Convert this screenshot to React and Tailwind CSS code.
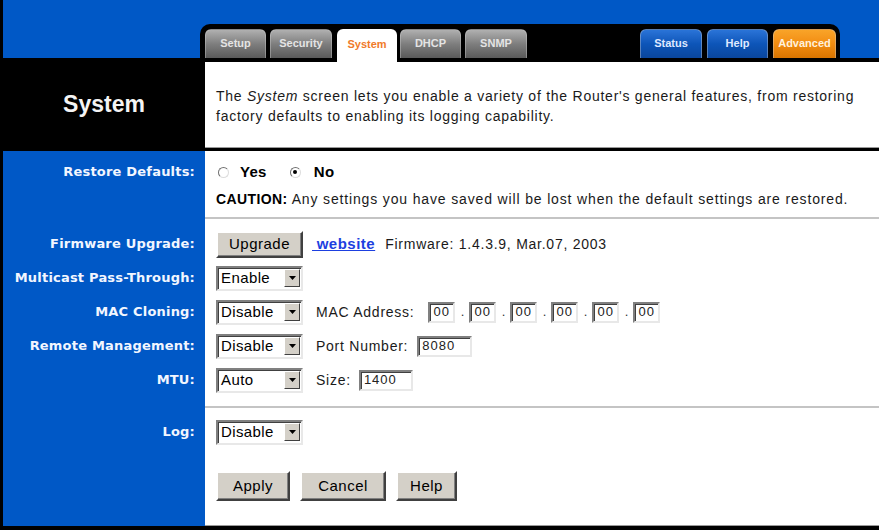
import { useState } from "react";

const BLUE = "bg-[#0058c6]";

function Tab({ label, active, kind = "gray", w }) {
  const styles = {
    gray: "bg-gradient-to-b from-[#b0b0b0] via-[#7e7e7e] to-[#5a5a5a] text-[#e4e4e4]",
    blue: "bg-gradient-to-b from-[#2a74d8] via-[#0d55b8] to-[#0a469c] text-[#dfe9ff]",
    orange: "bg-gradient-to-b from-[#f9a428] via-[#f28c10] to-[#d87400] text-[#fff1dc]",
  };
  if (active) {
    return (
      <div className={`${w} h-[33px] -mb-[4px] relative z-10 bg-white rounded-t-[6px] flex items-start justify-center pt-[7px] text-[11px] font-bold text-[#f07a2a]`}>
        {label}
      </div>
    );
  }
  return (
    <div className={`${w} h-[29px] rounded-t-[6px] flex items-center justify-center pb-[1px] text-[11px] font-bold border-t border-x border-[#d0d0d0]/40 ${styles[kind]}`}>
      {label}
    </div>
  );
}

function Label({ children, top }) {
  return (
    <div
      className={`w-[202px] shrink-0 ${BLUE} flex justify-end pr-[10px] text-[13px] tracking-[0.2px] font-bold text-[#f2f6ff] ${top ? "items-start pt-[11px] leading-[20px]" : "items-center"}`}
      style={{ fontFamily: '"DejaVu Sans", Verdana, sans-serif' }}
    >
      {children}
    </div>
  );
}

function Row({ label, h = "h-[34px]", children }) {
  return (
    <div className={`flex ${h}`}>
      <Label>{label}</Label>
      <div className="flex-1 bg-white flex items-center pl-[11px]">{children}</div>
    </div>
  );
}

function Spacer({ h }) {
  return (
    <div className={`flex ${h}`}>
      <div className={`w-[202px] shrink-0 ${BLUE}`} />
      <div className="flex-1 bg-white" />
    </div>
  );
}

function Separator() {
  return (
    <div className="flex h-[2px]">
      <div className={`w-[202px] shrink-0 ${BLUE}`} />
      <div className="flex-1 bg-[#c4c4c4]" />
    </div>
  );
}

function Select({ value, w = "w-[87px]" }) {
  return (
    <div className={`${w} h-[25px] bg-white border-2 border-t-[#808080] border-l-[#808080] border-r-[#e8e8e8] border-b-[#e8e8e8] shadow-[inset_1px_1px_0_#404040] flex items-center pl-[3px] pr-[1px] text-[15px] tracking-[0.4px] text-black`}>
      <span>{value}</span>
      <div className="ml-auto w-[16px] h-[18px] bg-[#d4d0c8] border border-t-white border-l-white border-r-[#404040] border-b-[#404040] flex items-center justify-center">
        <svg width="7" height="4" viewBox="0 0 7 4">
          <path d="M0 0h7L3.5 4z" fill="#000" />
        </svg>
      </div>
    </div>
  );
}

function Button({ children, w, h = "h-[30px]" }) {
  return (
    <button className={`${w} ${h} bg-[#d4d0c8] border-2 border-t-white border-l-white border-r-[#404040] border-b-[#404040] shadow-[inset_-1px_-1px_0_#808080] text-[15px] tracking-[0.5px] text-black flex items-center justify-center`}>
      {children}
    </button>
  );
}

function TextBox({ value, w }) {
  return (
    <div className={`${w} h-[21px] bg-white border-2 border-t-[#808080] border-l-[#808080] border-r-[#e8e8e8] border-b-[#e8e8e8] shadow-[inset_1px_1px_0_#404040] flex items-center pl-[3px] text-[13px] tracking-[1px] text-[#222]`}>
      {value}
    </div>
  );
}

function Radio({ checked }) {
  return (
    <div className="w-[11px] h-[11px] rounded-full bg-white border border-t-[#707070] border-l-[#707070] border-r-[#dcdcdc] border-b-[#dcdcdc] flex items-center justify-center">
      {checked && <div className="w-[4px] h-[4px] rounded-full bg-black" />}
    </div>
  );
}

const body = "text-[14px] tracking-[0.75px] text-[#1a1a1a]";

export default function App() {
  const [restore, setRestore] = useState("no");
  const mac = ["00", "00", "00", "00", "00", "00"];

  return (
    <div
      className="w-[879px] h-[530px] bg-black pl-[3px] pb-[4px] overflow-hidden flex flex-col"
      style={{ fontFamily: '"Liberation Sans", Arial, sans-serif' }}
    >
      {/* Header with tabs */}
      <div className={`h-[58px] shrink-0 ${BLUE} flex items-end`}>
        <div className="w-[197px]" />
        <div className="w-[640px] h-[34px] bg-black rounded-t-[10px] flex items-end pl-[5px] pr-[4px]">
          <Tab label="Setup" w="w-[61px]" />
          <div className="w-[4px]" />
          <Tab label="Security" w="w-[62px]" />
          <div className="w-[5px]" />
          <Tab label="System" w="w-[60px]" active />
          <div className="w-[3px]" />
          <Tab label="DHCP" w="w-[61px]" />
          <div className="w-[4px]" />
          <Tab label="SNMP" w="w-[62px]" />
          <div className="flex-1" />
          <Tab label="Status" w="w-[62px]" kind="blue" />
          <div className="w-[5px]" />
          <Tab label="Help" w="w-[61px]" kind="blue" />
          <div className="w-[5px]" />
          <Tab label="Advanced" w="w-[63px]" kind="orange" />
        </div>
      </div>

      {/* Title / description */}
      <div className="h-[93px] shrink-0 flex">
        <div className="w-[202px] shrink-0 bg-black flex items-center justify-center text-[23px] font-bold text-[#f4f4f4]">
          System
        </div>
        <div className="flex-1 flex flex-col pt-[4px]">
          <div className={`flex-1 bg-white pl-[11px] pt-[24px] leading-[20px] border-b border-[#9a9a9a] ${body}`}>
            The <i>System</i> screen lets you enable a variety of the Router's general features, from restoring
            <br />
            factory defaults to enabling its logging capability.
          </div>
          <div className="h-[3px] bg-black" />
        </div>
      </div>

      {/* Settings */}
      <div className="flex-1 flex flex-col">
        <div className="flex h-[66px]">
          <Label top>Restore Defaults:</Label>
          <div className="flex-1 bg-white pl-[11px] pt-[11px]">
            <div className="h-[20px] flex items-center text-[15px] tracking-[0.3px] font-bold text-black">
              <button className="flex items-center" onClick={() => setRestore("yes")}>
                <span className="ml-[2px]"><Radio checked={restore === "yes"} /></span>
                <span className="ml-[11px]">Yes</span>
              </button>
              <button className="flex items-center ml-[23px]" onClick={() => setRestore("no")}>
                <Radio checked={restore === "no"} />
                <span className="ml-[13px]">No</span>
              </button>
            </div>
            <div className="mt-[8px] h-[18px] flex items-center text-[14px] tracking-[0.85px] text-[#1a1a1a]">
              <b className="text-black tracking-[0.4px]">CAUTION:</b>
              <span className="ml-[4px]">Any settings you have saved will be lost when the default settings are restored.</span>
            </div>
          </div>
        </div>
        <Separator />
        <Spacer h="h-[8px]" />

        <Row label="Firmware Upgrade:">
          <Button w="w-[87px]" h="h-[27px]">Upgrade</Button>
          <a className="ml-[9px] text-[15px] tracking-[0.5px] font-bold text-[#1d3fe0] underline">&nbsp;website</a>
          <span className={`ml-[10px] ${body}`}>Firmware: 1.4.3.9, Mar.07, 2003</span>
        </Row>
        <Row label="Multicast Pass-Through:">
          <Select value="Enable" />
        </Row>
        <Row label="MAC Cloning:">
          <Select value="Disable" />
          <span className={`ml-[13px] mr-[14px] ${body}`}>MAC Address:</span>
          {mac.map((m, i) => (
            <div key={i} className="flex items-center">
              {i > 0 && <span className="w-[14px] text-center text-[13px] text-[#333]">.</span>}
              <TextBox value={m} w="w-[27px]" />
            </div>
          ))}
        </Row>
        <Row label="Remote Management:">
          <Select value="Disable" />
          <span className={`ml-[13px] mr-[9px] ${body}`}>Port Number:</span>
          <TextBox value="8080" w="w-[55px]" />
        </Row>
        <Row label="MTU:">
          <Select value="Auto" />
          <span className={`ml-[13px] mr-[8px] ${body}`}>Size:</span>
          <TextBox value="1400" w="w-[54px]" />
        </Row>

        <Spacer h="h-[9px]" />
        <Separator />
        <Spacer h="h-[7px]" />

        <Row label="Log:">
          <Select value="Disable" />
        </Row>
        <Spacer h="h-[20px]" />
        <Row label="">
          <div className="flex gap-[10px]">
            <Button w="w-[74px]">Apply</Button>
            <Button w="w-[86px]">Cancel</Button>
            <Button w="w-[61px]">Help</Button>
          </div>
        </Row>
        <div className="flex flex-1">
          <div className={`w-[202px] shrink-0 ${BLUE}`} />
          <div className="flex-1 bg-white border-b border-[#9a9a9a]" />
        </div>
      </div>
    </div>
  );
}
